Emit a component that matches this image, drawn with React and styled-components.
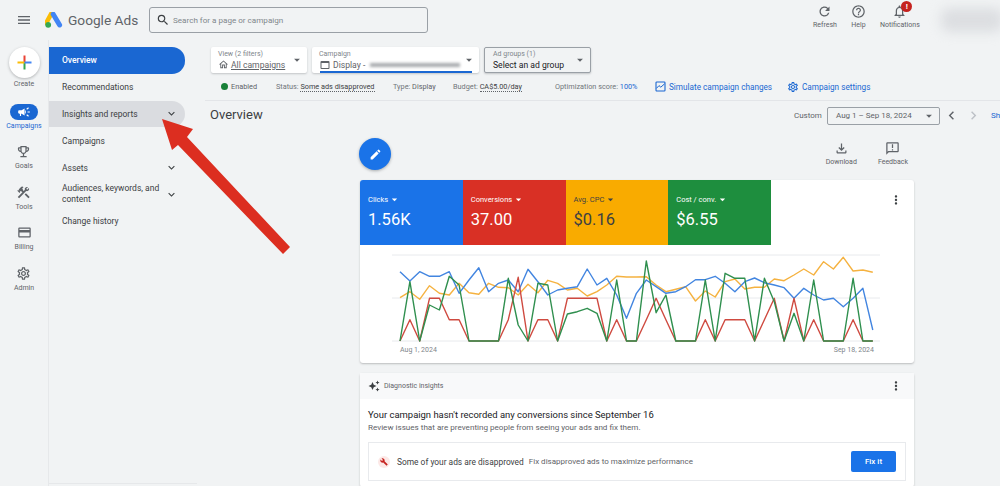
import React from "react";
import styled, { createGlobalStyle } from "styled-components";
import {
  MdMenu,
  MdSearch,
  MdRefresh,
  MdHelpOutline,
  MdNotificationsNone,
  MdCampaign,
  MdOutlineEmojiEvents,
  MdConstruction,
  MdOutlineCreditCard,
  MdOutlineSettings,
  MdKeyboardArrowDown,
  MdArrowDropDown,
  MdOutlineHome,
  MdOutlineWebAsset,
  MdChevronLeft,
  MdChevronRight,
  MdOutlineFileDownload,
  MdOutlineAnnouncement,
  MdEdit,
  MdMoreVert,
  MdAutoAwesome,
  MdBuild,
} from "react-icons/md";

const GlobalStyle = createGlobalStyle`
  html, body {
    margin: 0;
    padding: 0;
    background: #f1f3f4;
    font-family: Roboto, "Liberation Sans", sans-serif;
    color: #3c4043;
  }
`;

const railItems = [
  { label: "Goals", Icon: MdOutlineEmojiEvents },
  { label: "Tools", Icon: MdConstruction },
  { label: "Billing", Icon: MdOutlineCreditCard },
  { label: "Admin", Icon: MdOutlineSettings },
];

const tiles = [
  { name: "Clicks", value: "1.56K", bg: "#1a73e8", fg: "#fff" },
  { name: "Conversions", value: "37.00", bg: "#d93025", fg: "#fff" },
  { name: "Avg. CPC", value: "$0.16", bg: "#f9ab00", fg: "#3c4043" },
  { name: "Cost / conv.", value: "$6.55", bg: "#1e8e3e", fg: "#fff" },
];

// y values read off the reference, 49 days
const series = [
  {
    color: "#f5b240",
    ys: [158, 140, 163, 122, 145, 150, 115, 143, 148, 115, 127, 128, 150, 118, 143, 106, 115, 135, 130, 153, 140, 120, 94, 96, 96, 95, 120, 140, 133, 125, 168, 138, 156, 110, 102, 132, 127, 127, 102, 107, 90, 72, 90, 50, 72, 37, 78, 75, 82],
  },
  {
    color: "#4285e0",
    ys: [80, 108, 80, 94, 94, 80, 145, 105, 68, 140, 115, 105, 140, 73, 110, 150, 135, 130, 125, 72, 120, 100, 150, 220, 145, 105, 125, 145, 140, 125, 104, 104, 94, 115, 140, 110, 99, 113, 120, 128, 160, 130, 150, 165, 160, 185, 160, 130, 255],
  },
  {
    color: "#cf4a40",
    ys: [288, 224, 288, 160, 160, 224, 224, 288, 288, 288, 288, 224, 97, 288, 224, 224, 288, 160, 160, 160, 160, 288, 224, 288, 288, 224, 160, 224, 288, 288, 288, 224, 288, 224, 224, 224, 288, 224, 160, 288, 160, 288, 224, 288, 288, 288, 224, 288, 288],
  },
  {
    color: "#2f8f4e",
    ys: [288, 110, 288, 180, 195, 94, 120, 288, 288, 288, 288, 100, 240, 288, 115, 120, 288, 207, 200, 190, 205, 288, 105, 288, 288, 48, 203, 150, 288, 288, 288, 105, 288, 85, 100, 100, 288, 100, 170, 288, 205, 288, 105, 288, 288, 288, 100, 288, 288],
  },
];

const toPoints = (ys) =>
  ys.map((y, i) => `${(40 + i * 9.85).toFixed(1)},${(y / 3).toFixed(1)}`).join(" ");

const GoogleAdsLogo = () => (
  <svg width="18" height="16" viewBox="0 0 18 16">
    <path d="M6.6 1.2 1.2 11" stroke="#fbbc04" strokeWidth="4.6" strokeLinecap="round" fill="none" />
    <path d="M8.2 2.2 14.6 13" stroke="#4285f4" strokeWidth="5" strokeLinecap="round" fill="none" />
    <circle cx="3.2" cy="12.8" r="2.9" fill="#34a853" />
  </svg>
);

const PlusIcon = () => (
  <svg width="15" height="15" viewBox="0 0 15 15">
    <rect x="6.5" y="0.5" width="2" height="7" fill="#ea4335" />
    <rect x="6.5" y="7.5" width="2" height="7" fill="#34a853" />
    <rect x="0.5" y="6.5" width="7" height="2" fill="#fbbc04" />
    <rect x="7.5" y="6.5" width="7" height="2" fill="#4285f4" />
  </svg>
);

const SimulateIcon = () => (
  <svg width="11" height="11" viewBox="0 0 11 11" fill="none" stroke="currentColor">
    <rect x="1" y="1" width="9" height="9" rx="0.8" strokeWidth="1.1" />
    <path d="M1.4 7.4 4 4.6 5.8 6.2 9.6 2.8" strokeWidth="1" />
  </svg>
);

const BigArrow = () => (
  <ArrowSvg width="300" height="260" viewBox="0 0 300 260">
    <polygon points="162,119 193,129 187,137 290,247 283,254 178,145 172,150" fill="#dc2e20" />
  </ArrowSvg>
);

export default function App() {
  return (
    <Page>
      <GlobalStyle />
      <Header>
        <MenuBtn>
          <MdMenu size={16} />
        </MenuBtn>
        <GoogleAdsLogo />
        <Brand>Google Ads</Brand>
        <SearchBox>
          <MdSearch size={14} color="#3c4043" />
          <span>Search for a page or campaign</span>
        </SearchBox>
        <HeaderActions>
          <HeaderAction>
            <MdRefresh size={15} />
            <span>Refresh</span>
          </HeaderAction>
          <HeaderAction>
            <MdHelpOutline size={15} />
            <span>Help</span>
          </HeaderAction>
          <HeaderAction>
            <BellWrap>
              <MdNotificationsNone size={15} />
              <Badge>!</Badge>
            </BellWrap>
            <span>Notifications</span>
          </HeaderAction>
        </HeaderActions>
        <AccountBlur />
      </Header>

      <Body>
        <Rail>
          <CreateItem>
            <CreateCircle>
              <PlusIcon />
            </CreateCircle>
            <RailLabel>Create</RailLabel>
          </CreateItem>
          <CampaignsItem>
            <CampaignPill>
              <MdCampaign size={14} color="#fff" />
            </CampaignPill>
            <RailLabel $active>Campaigns</RailLabel>
          </CampaignsItem>
          {railItems.map(({ label, Icon }) => (
            <RailItem key={label}>
              <Icon size={15} />
              <RailLabel>{label}</RailLabel>
            </RailItem>
          ))}
        </Rail>

        <SideNav>
          <NavItem $active>Overview</NavItem>
          <NavItem>Recommendations</NavItem>
          <NavItem $hover>
            Insights and reports
            <MdKeyboardArrowDown size={13} />
          </NavItem>
          <NavItem>Campaigns</NavItem>
          <NavItem>
            Assets
            <MdKeyboardArrowDown size={13} />
          </NavItem>
          <NavItem>
            <NavWrap>Audiences, keywords, and content</NavWrap>
            <MdKeyboardArrowDown size={13} />
          </NavItem>
          <NavItem>Change history</NavItem>
        </SideNav>

        <Main>
          <Filters>
            <FilterChip $w={96}>
              <div>
                <ChipLabel>View (2 filters)</ChipLabel>
                <ChipValue>
                  <MdOutlineHome size={11} />
                  <u>All campaigns</u>
                </ChipValue>
              </div>
              <MdArrowDropDown size={14} />
            </FilterChip>
            <FilterChip $w={167} $selected>
              <div>
                <ChipLabel>Campaign</ChipLabel>
                <ChipValue>
                  <MdOutlineWebAsset size={12} />
                  Display -<NameBlur />
                </ChipValue>
              </div>
              <MdArrowDropDown size={14} />
            </FilterChip>
            <FilterChip $w={107} $outlined>
              <div>
                <ChipLabel>Ad groups (1)</ChipLabel>
                <ChipValue $dark>Select an ad group</ChipValue>
              </div>
              <MdArrowDropDown size={14} />
            </FilterChip>
          </Filters>

          <StatusRow>
            <EnabledDot />
            <StatusText $w={45} $dark>
              Enabled
            </StatusText>
            <StatusText $w={117}>
              Status: <Dotted>Some ads disapproved</Dotted>
            </StatusText>
            <StatusText $w={60}>
              Type: <Plain>Display</Plain>
            </StatusText>
            <StatusText $w={102}>
              Budget: <Dotted>CA$5.00/day</Dotted>
            </StatusText>
            <StatusText $w={100}>
              Optimization score: <BlueText>100%</BlueText>
            </StatusText>
            <StatusLink $w={132}>
              <SimulateIcon />
              Simulate campaign changes
            </StatusLink>
            <StatusLink>
              <MdOutlineSettings size={12} />
              Campaign settings
            </StatusLink>
          </StatusRow>

          <TitleRow>
            <Title>Overview</Title>
            <CustomLabel>Custom</CustomLabel>
            <DateBox>
              Aug 1 – Sep 18, 2024
              <MdArrowDropDown size={14} />
            </DateBox>
            <MdChevronLeft size={17} />
            <NextChevron>
              <MdChevronRight size={17} />
            </NextChevron>
            <ShowLink>Show</ShowLink>
          </TitleRow>

          <Content>
            <ToolRow>
              <Fab>
                <MdEdit size={13} color="#fff" />
              </Fab>
              <ToolActions>
                <ToolAction>
                  <MdOutlineFileDownload size={15} />
                  <span>Download</span>
                </ToolAction>
                <ToolAction>
                  <MdOutlineAnnouncement size={15} />
                  <span>Feedback</span>
                </ToolAction>
              </ToolActions>
            </ToolRow>

            <ChartCard>
              <TileRow>
                {tiles.map((t) => (
                  <Tile key={t.name} $bg={t.bg} $fg={t.fg}>
                    <TileName>
                      {t.name}
                      <MdArrowDropDown size={13} />
                    </TileName>
                    <TileValue>{t.value}</TileValue>
                  </Tile>
                ))}
                <TileSpacer>
                  <MdMoreVert size={14} />
                </TileSpacer>
              </TileRow>
              <ChartWrap>
                <svg width="554" height="118" viewBox="0 0 554 118">
                  {[10, 53, 96].map((y) => (
                    <line key={y} x1="32" x2="520" y1={y} y2={y} stroke="#e8eaed" strokeWidth="1" />
                  ))}
                  {series.map((s) => (
                    <polyline
                      key={s.color}
                      points={toPoints(s.ys)}
                      fill="none"
                      stroke={s.color}
                      strokeWidth="1.4"
                      strokeLinejoin="round"
                    />
                  ))}
                </svg>
                <AxisLabels>
                  <span>Aug 1, 2024</span>
                  <span>Sep 18, 2024</span>
                </AxisLabels>
              </ChartWrap>
            </ChartCard>

            <InsightCard>
              <InsightHead>
                <InsightTitle>
                  <MdAutoAwesome size={12} color="#3c4043" />
                  Diagnostic insights
                </InsightTitle>
                <MdMoreVert size={14} />
              </InsightHead>
              <InsightBody>
                <InsightHeading>Your campaign hasn't recorded any conversions since September 16</InsightHeading>
                <InsightSub>Review issues that are preventing people from seeing your ads and fix them.</InsightSub>
                <IssueBox>
                  <IssueIcon>
                    <MdBuild size={8} color="#c5221f" />
                  </IssueIcon>
                  <IssueTitle>Some of your ads are disapproved</IssueTitle>
                  <IssueText>Fix disapproved ads to maximize performance</IssueText>
                  <FixButton>Fix it</FixButton>
                </IssueBox>
              </InsightBody>
            </InsightCard>
          </Content>
        </Main>
      </Body>
      <BigArrow />
    </Page>
  );
}

const Page = styled.div`
  position: relative;
  width: 1000px;
  height: 486px;
  overflow: hidden;
  background: #f1f3f4;
`;

const ArrowSvg = styled.svg`
  position: absolute;
  left: 0;
  top: 0;
  pointer-events: none;
`;

const Header = styled.header`
  display: flex;
  align-items: center;
  height: 40px;
  padding-left: 16px;
  box-sizing: border-box;
  > * {
    flex-shrink: 0;
  }
`;

const MenuBtn = styled.div`
  display: flex;
  width: 29px;
  color: #5f6368;
`;

const Brand = styled.div`
  margin-left: 5px;
  width: 81px;
  font-size: 13.7px;
  color: #5f6368;
  white-space: nowrap;
`;

const SearchBox = styled.div`
  display: flex;
  align-items: center;
  gap: 3px;
  width: 279px;
  height: 26px;
  padding-left: 6px;
  box-sizing: border-box;
  border: 1px solid #9aa0a6;
  border-radius: 3px;
  font-size: 8.1px;
  color: #80868b;
`;

const HeaderActions = styled.div`
  display: flex;
  align-self: flex-start;
  padding-top: 4px;
  margin-left: 385px;
  gap: 14px;
`;

const HeaderAction = styled.div`
  display: flex;
  flex-direction: column;
  align-items: center;
  gap: 2px;
  color: #5f6368;
  font-size: 7px;
`;

const BellWrap = styled.div`
  position: relative;
  display: flex;
`;

const Badge = styled.span`
  position: absolute;
  top: -3px;
  right: -5px;
  width: 11px;
  height: 11px;
  border-radius: 50%;
  background: #c5221f;
  color: #fff;
  font-size: 8px;
  font-weight: 700;
  line-height: 11px;
  text-align: center;
`;

const AccountBlur = styled.div`
  width: 62px;
  height: 24px;
  margin-left: 21px;
  background: #dcdee1;
  border-radius: 8px;
  filter: blur(6px);
`;

const Body = styled.div`
  display: flex;
  height: 446px;
`;

const Rail = styled.nav`
  width: 49px;
  flex-shrink: 0;
  box-sizing: border-box;
  border-right: 1px solid #e6e8ea;
  display: flex;
  flex-direction: column;
  align-items: center;
  padding-top: 7px;
`;

const CreateItem = styled.div`
  display: flex;
  flex-direction: column;
  align-items: center;
  gap: 2px;
  height: 57px;
`;

const CreateCircle = styled.div`
  width: 31px;
  height: 31px;
  border-radius: 50%;
  background: #fff;
  box-shadow: 0 1px 3px rgba(60, 64, 67, 0.35);
  display: flex;
  align-items: center;
  justify-content: center;
`;

const CampaignsItem = styled.div`
  display: flex;
  flex-direction: column;
  align-items: center;
  gap: 2px;
  height: 40px;
`;

const CampaignPill = styled.div`
  width: 28px;
  height: 16px;
  border-radius: 8px;
  background: #1a67d2;
  display: flex;
  align-items: center;
  justify-content: center;
`;

const RailItem = styled.div`
  display: flex;
  flex-direction: column;
  align-items: center;
  gap: 3px;
  height: 40.5px;
  color: #5f6368;
`;

const RailLabel = styled.span`
  font-size: 7px;
  line-height: 9px;
  color: ${(p) => (p.$active ? "#1a67d2" : "#5f6368")};
`;

const SideNav = styled.nav`
  width: 148px;
  height: 444px;
  flex-shrink: 0;
  box-sizing: border-box;
  border-bottom: 1px solid #e6e8ea;
  padding-top: 7px;
  display: flex;
  flex-direction: column;
  align-items: flex-start;
`;

const NavItem = styled.div`
  display: flex;
  align-items: center;
  justify-content: space-between;
  width: 136px;
  height: 26.8px;
  box-sizing: border-box;
  padding: 0 7px 0 13px;
  border-radius: 0 13px 13px 0;
  font-size: 8.5px;
  color: ${(p) => (p.$active ? "#fff" : "#3c4043")};
  background: ${(p) => (p.$active ? "#1a67d2" : p.$hover ? "#dadce0" : "transparent")};
  font-weight: ${(p) => (p.$active ? 500 : 400)};
`;

const NavWrap = styled.div`
  width: 102px;
  line-height: 11.5px;
`;

const Main = styled.main`
  flex: 1;
  min-width: 0;
  padding-top: 7px;
`;

const Filters = styled.div`
  display: flex;
  gap: 5px;
  padding-left: 14px;
`;

const FilterChip = styled.div`
  position: relative;
  width: ${(p) => p.$w}px;
  height: 26px;
  box-sizing: border-box;
  display: flex;
  align-items: center;
  justify-content: space-between;
  padding: 0 3px 0 ${(p) => (p.$outlined ? "8px" : "7px")};
  border-radius: 2px;
  background: ${(p) => (p.$outlined ? "#f1f3f4" : "#fff")};
  border: ${(p) => (p.$outlined ? "1px solid #9aa0a6" : "none")};
  box-shadow: 0 1px 2px rgba(60, 64, 67, 0.25);
  color: #5f6368;
  ${(p) =>
    p.$selected &&
    `&::after {
      content: "";
      position: absolute;
      left: 8px;
      right: 7px;
      bottom: 0;
      height: 2px;
      background: #1a67d2;
    }`}
`;

const ChipLabel = styled.div`
  font-size: 7px;
  line-height: 9px;
  color: #80868b;
`;

const ChipValue = styled.div`
  display: flex;
  align-items: center;
  gap: 2px;
  font-size: 8.6px;
  line-height: 12px;
  white-space: nowrap;
  color: ${(p) => (p.$dark ? "#202124" : "#5f6368")};
`;

const NameBlur = styled.span`
  display: inline-block;
  width: 90px;
  height: 4px;
  margin-left: 3px;
  background: #a8abae;
  filter: blur(1.5px);
`;

const StatusRow = styled.div`
  display: flex;
  align-items: center;
  height: 27px;
  margin-left: 8px;
  padding-left: 16px;
  border-bottom: 1px solid #e3e5e8;
  font-size: 7.3px;
  white-space: nowrap;
`;

const EnabledDot = styled.span`
  width: 7px;
  height: 7px;
  margin-right: 3px;
  border-radius: 50%;
  background: #188038;
`;

const StatusText = styled.span`
  flex: 0 0 ${(p) => p.$w}px;
  color: ${(p) => (p.$dark ? "#5f6368" : "#70757a")};
`;

const Dotted = styled.span`
  color: #3c4043;
  border-bottom: 1px dotted #5f6368;
`;

const Plain = styled.span`
  color: #5f6368;
`;

const BlueText = styled.span`
  color: #1a67d2;
`;

const StatusLink = styled.span`
  display: flex;
  align-items: center;
  gap: 3px;
  ${(p) => p.$w && `flex: 0 0 ${p.$w}px;`}
  font-size: 8.2px;
  color: #1a67d2;
`;

const TitleRow = styled.div`
  display: flex;
  align-items: center;
  height: 29px;
  padding-left: 13px;
  color: #5f6368;
  > * {
    flex-shrink: 0;
  }
`;

const Title = styled.h1`
  flex: 0 0 584px;
  margin: 0 0 2px;
  font-size: 13px;
  font-weight: 400;
  color: #3c4043;
`;

const CustomLabel = styled.span`
  flex: 0 0 33px;
  font-size: 8px;
`;

const DateBox = styled.div`
  display: flex;
  align-items: center;
  justify-content: space-between;
  flex: 0 0 113px;
  height: 18px;
  box-sizing: border-box;
  padding: 0 3px 0 8px;
  margin-right: 3px;
  border: 1px solid #9aa0a6;
  border-radius: 2px;
  font-size: 8px;
`;

const NextChevron = styled.span`
  display: flex;
  margin-left: 5px;
  color: #bdc1c6;
`;

const ShowLink = styled.span`
  margin-left: 9px;
  font-size: 8px;
  color: #1a67d2;
  white-space: nowrap;
`;

const Content = styled.div`
  width: 554px;
  margin-left: 163px;
`;

const ToolRow = styled.div`
  display: flex;
  align-items: flex-start;
  justify-content: space-between;
  height: 50px;
  padding-top: 8px;
  box-sizing: border-box;
`;

const Fab = styled.div`
  width: 32px;
  height: 32px;
  margin-left: -1px;
  border-radius: 50%;
  background: #1a73e8;
  box-shadow: 0 1px 3px rgba(60, 64, 67, 0.4);
  display: flex;
  align-items: center;
  justify-content: center;
`;

const ToolActions = styled.div`
  display: flex;
  gap: 21px;
  margin-right: 6px;
  padding-top: 3px;
`;

const ToolAction = styled.div`
  display: flex;
  flex-direction: column;
  align-items: center;
  gap: 2px;
  font-size: 7px;
  color: #5f6368;
`;

const ChartCard = styled.section`
  height: 183px;
  background: #fff;
  border-radius: 3px;
  box-shadow: 0 1px 2px rgba(60, 64, 67, 0.3);
  overflow: hidden;
`;

const TileRow = styled.div`
  display: flex;
  height: 65px;
`;

const Tile = styled.div`
  width: 102.75px;
  box-sizing: border-box;
  padding: 13px 8px;
  background: ${(p) => p.$bg};
  color: ${(p) => p.$fg};
`;

const TileName = styled.div`
  display: flex;
  align-items: center;
  font-size: 7.5px;
  line-height: 13px;
`;

const TileValue = styled.div`
  font-size: 16.5px;
  line-height: 22px;
  margin-top: 3px;
`;

const TileSpacer = styled.div`
  flex: 1;
  display: flex;
  justify-content: flex-end;
  padding: 13px 11px 0 0;
  color: #3c4043;
`;

const ChartWrap = styled.div`
  position: relative;
  height: 118px;
`;

const AxisLabels = styled.div`
  position: absolute;
  left: 40px;
  width: 474px;
  top: 101px;
  display: flex;
  justify-content: space-between;
  font-size: 7px;
  color: #80868b;
`;

const InsightCard = styled.section`
  margin-top: 10px;
  background: #fff;
  border-radius: 3px;
  box-shadow: 0 1px 2px rgba(60, 64, 67, 0.3);
`;

const InsightHead = styled.div`
  display: flex;
  align-items: center;
  justify-content: space-between;
  height: 26px;
  padding: 0 11px 0 8px;
  background: #f8f9fa;
  color: #3c4043;
`;

const InsightTitle = styled.div`
  display: flex;
  align-items: center;
  gap: 4px;
  font-size: 7px;
  color: #5f6368;
`;

const InsightBody = styled.div`
  padding: 9px 8px 6px;
`;

const InsightHeading = styled.div`
  font-size: 9.45px;
  line-height: 13px;
  color: #202124;
`;

const InsightSub = styled.div`
  font-size: 8.1px;
  line-height: 13px;
  color: #5f6368;
`;

const IssueBox = styled.div`
  display: flex;
  align-items: center;
  height: 39px;
  margin-top: 8px;
  padding: 0 9px;
  box-sizing: border-box;
  border: 1px solid #e8eaed;
`;

const IssueIcon = styled.div`
  width: 12px;
  height: 12px;
  margin-right: 7px;
  border-radius: 50%;
  background: #fce8e6;
  display: flex;
  align-items: center;
  justify-content: center;
`;

const IssueTitle = styled.span`
  font-size: 8.4px;
  color: #3c4043;
  margin-right: 5px;
`;

const IssueText = styled.span`
  flex: 1;
  font-size: 8px;
  color: #5f6368;
`;

const FixButton = styled.div`
  width: 45px;
  height: 21px;
  border-radius: 2px;
  background: #1a73e8;
  color: #fff;
  font-size: 8px;
  font-weight: 500;
  line-height: 21px;
  text-align: center;
`;
